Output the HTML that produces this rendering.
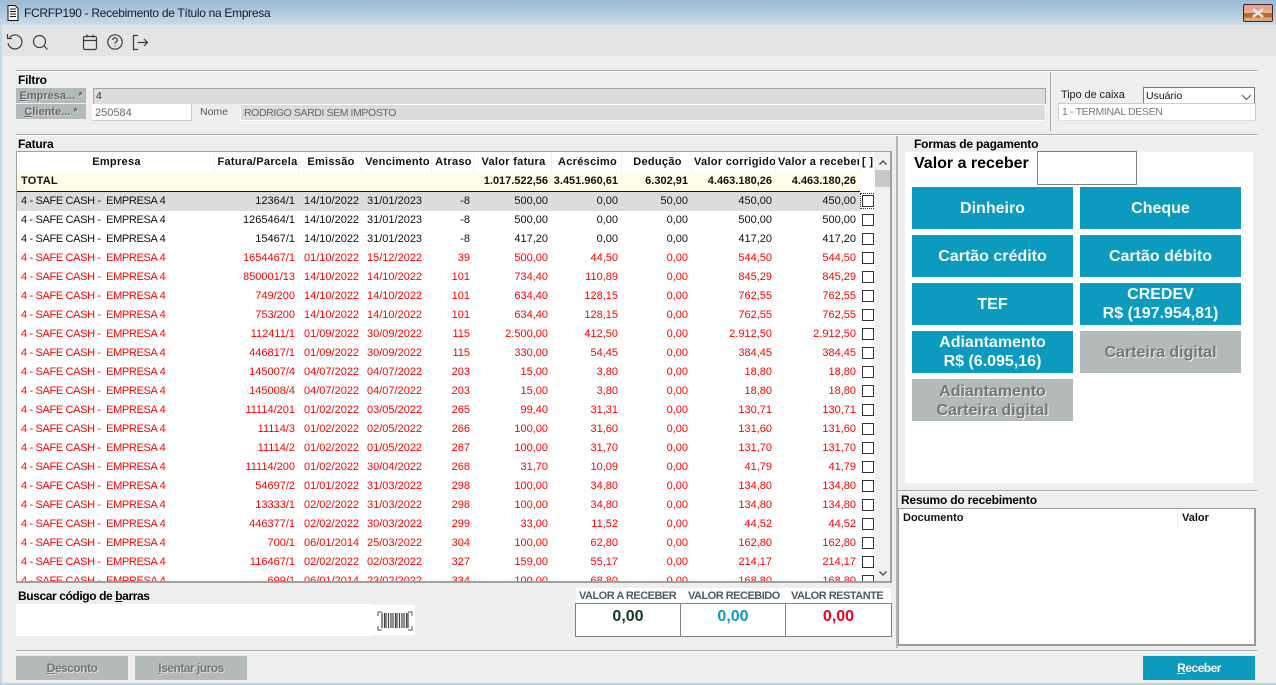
<!DOCTYPE html>
<html lang="pt"><head><meta charset="utf-8"><title>FCRFP190</title>
<style>
*{box-sizing:border-box}
html,body{margin:0;padding:0}
body{width:1276px;height:685px;overflow:hidden;background:#eee;position:relative;font:11px "Liberation Sans",sans-serif;color:#111}
.a{position:absolute}
.l{position:absolute;white-space:nowrap}
.b{font-weight:bold;font-size:12px;color:#000;letter-spacing:-.2px}
.btn{position:absolute;background:#0d9abf;color:#f4fbfd;font-weight:bold;font-size:16px;line-height:19px;text-align:center;display:flex;align-items:center;justify-content:center;width:161px;height:42px}
.dis{background:#b4b9b9;color:#747678;text-shadow:1px 1px 0 #eee}
.sb{position:absolute;top:656px;height:24px;width:112px;background:#b4b9b9;color:#747678;font-weight:bold;font-size:12px;line-height:24px;text-align:center;text-shadow:1px 1px 0 #ddd;letter-spacing:-.5px}
.hr{position:absolute;height:2px;background:#aaa;border-bottom:1px solid #fafafa}
.lb{position:absolute;left:16px;width:70px;height:15px;background:#b4b9b9;color:#68686c;text-align:center;line-height:17px;font-weight:bold;text-shadow:1px 1px 0 #ddd;overflow:hidden}
table{border-collapse:separate;border-spacing:0;table-layout:fixed;position:absolute;left:0;top:0;width:858px}
td,th{padding:0;height:19px;line-height:19px;white-space:nowrap;overflow:hidden;text-align:right;padding-right:4px;font-size:11px}
th{font-weight:bold;text-align:center;padding:0 0 0 2px;height:20px;line-height:18px;border-right:1px solid #f0f0f0;letter-spacing:.3px;color:#111}
td:first-child{text-align:left;padding-left:4px;letter-spacing:-.35px}
td:nth-child(3),td:nth-child(4){text-align:left;padding-left:5px;padding-right:0}
.t td{background:#fffde8;font-weight:bold;border-bottom:1px solid #111;height:20px;line-height:19px}
.t td:first-child{letter-spacing:.25px}
.r td{color:#ff0000}
.s td{background:#dcdcdc}
td:last-child,.s td:last-child{background:#fff;padding:0;position:relative}
td i{position:absolute;left:2px;top:3px;width:12px;height:12px;border:1px solid #333;background:#fff}
.sel i{outline:1px dotted #333;outline-offset:1px}
.v{font-weight:bold;line-height:14px;color:#4f5a68;letter-spacing:-.5px}
.n{top:608px;text-align:center;font-weight:bold;font-size:16px;line-height:18px}
</style></head><body>

<div class="a" style="left:0;top:0;width:1276px;height:25px;background:linear-gradient(#9bb8d4,#c9dbea)"></div>
<svg class="a" style="left:5px;top:4px" width="16" height="18" viewBox="0 0 16 18"><path d="M3 1.500h7l3 3v12H3z" fill="#fff" stroke="#111"/><path d="M5 5h6M5 7.500h6M5 10h6M5 12.500h6" stroke="#111"/></svg>
<div class="l" style="left:24px;top:6px;font-size:12px;line-height:15px;color:#1a1a2a;letter-spacing:-.3px">FCRFP190 - Recebimento de Título na Empresa</div>
<div class="a" style="left:1243px;top:4px;width:30px;height:18px;border:1px solid #4a2020;border-radius:2px;background:linear-gradient(#e5a18e 0 30%,#e3b48f 30% 50%,#b96a2e 50% 78%,#dca67c 78%)"></div>
<svg class="a" style="left:1251px;top:7px" width="14" height="12" viewBox="0 0 14 12"><path d="M2 2l10 8M12 2l-10 8" stroke="#e6e6e6" stroke-width="2.500"/></svg>

<div class="a" style="left:0;top:25px;width:1276px;height:31px;background:#e4e4e4"></div>
<svg class="a" style="left:0;top:25px" width="160" height="30" viewBox="0 0 160 30" fill="none" stroke="#3c3c3c" stroke-width="1.200">
<path d="M9.500 12.500A7 7 0 1 1 8 18"/><path d="M7.500 9v4.500H12"/>
<circle cx="39.500" cy="16.500" r="6"/><path d="M44 21l3.500 3.500"/>
<rect x="83.500" y="11.500" width="13" height="13" rx="1.500"/><path d="M83.500 15.500h13M87 9.500v3M93 9.500v3"/>
<circle cx="115" cy="17" r="7.200"/><path d="M112.800 15a2.200 2.200 0 1 1 3.200 2c-.8.5-1 .9-1 1.800M115 20.500v1"/>
<path d="M138 10.500h-4.500v14h4.500"/><path d="M137.500 17.500h10M144 14l3.500 3.500-3.500 3.500"/>
</svg>

<div class="a" style="left:0;top:25px;width:2px;height:660px;background:#c4d8ea"></div>
<div class="a" style="left:0;top:683px;width:1276px;height:2px;background:#b9d3ea"></div>

<div class="hr" style="left:16px;top:70px;width:1242px"></div>
<div class="l b" style="left:18px;top:73px;line-height:14px">Filtro</div>
<div class="a" style="left:1050px;top:72px;width:1px;height:59px;background:#aaa"></div>

<div class="lb" style="top:88px"><u>E</u>mpresa... *</div>
<div class="lb" style="top:104px"><u>C</u>liente... *</div>
<div class="a" style="left:93px;top:88px;width:953px;height:16px;background:#dcdcdc;border:1px solid #a5a5a5;border-bottom-color:#ddd;line-height:14px;padding-left:2px;font-size:10.500px;color:#333">4</div>
<div class="a" style="left:92px;top:104px;width:100px;height:17px;background:#fff;border-right:1px solid #ccc;border-bottom:1px solid #ccc;line-height:18px;padding-left:3px;color:#666">250584</div>
<div class="l" style="left:200px;top:105px;font-size:10.500px;line-height:14px;color:#555">Nome</div>
<div class="a" style="left:240px;top:104px;width:806px;height:17px;background:#dcdcdc;border:1px solid #fff;line-height:16px;padding-left:3px;font-size:10.500px;color:#666;letter-spacing:-.4px">RODRIGO SARDI SEM IMPOSTO</div>

<div class="l" style="left:1061px;top:88px;line-height:15px;color:#222;letter-spacing:-.1px">Tipo de caixa</div>
<div class="a" style="left:1143px;top:87px;width:112px;height:17px;background:#fff;border:1px solid #777;line-height:16px;padding-left:2px;font-size:10.500px;color:#111">Usuário</div>
<svg class="a" style="left:1241px;top:94px" width="11" height="7"><path d="M1 1l4.500 4.500L10 1" fill="none" stroke="#555"/></svg>
<div class="a" style="left:1058px;top:103px;width:198px;height:18px;background:#fff;border:1px solid #ccc;border-bottom:1px solid #ddd;line-height:16px;padding-left:3px;font-size:10.500px;color:#6d7b88;letter-spacing:-.35px">1 - TERMINAL DESEN</div>

<div class="hr" style="left:16px;top:134px;width:1242px"></div>
<div class="l b" style="left:18px;top:137px;line-height:14px">Fatura</div>

<div class="a" style="left:16px;top:151px;width:876px;height:432px;background:#fff;border:1px solid #a0a0a0;border-width:1px 2px 2px 1px;overflow:hidden">
<table>
<colgroup><col style="width:198px"><col style="width:84px"><col style="width:63px"><col style="width:70px"><col style="width:42px"><col style="width:78px"><col style="width:70px"><col style="width:70px"><col style="width:84px"><col style="width:84px"><col style="width:15px"></colgroup>
<tr><th>Empresa</th><th>Fatura/Parcela</th><th>Emissão</th><th>Vencimento</th><th>Atraso</th><th>Valor fatura</th><th>Acréscimo</th><th>Dedução</th><th>Valor corrigido</th><th>Valor a receber</th><th style="text-align:left">[ ]</th></tr>
<tr class="t"><td>TOTAL</td><td></td><td></td><td></td><td></td><td>1.017.522,56</td><td>3.451.960,61</td><td>6.302,91</td><td>4.463.180,26</td><td>4.463.180,26</td><td style="border-bottom:0"></td></tr>
<tr class="s"><td>4 - SAFE CASH -&nbsp; EMPRESA 4</td><td>12364/1</td><td>14/10/2022</td><td>31/01/2023</td><td>-8</td><td>500,00</td><td>0,00</td><td>50,00</td><td>450,00</td><td>450,00</td><td class="sel"><i></i></td></tr>
<tr><td>4 - SAFE CASH -&nbsp; EMPRESA 4</td><td>1265464/1</td><td>14/10/2022</td><td>31/01/2023</td><td>-8</td><td>500,00</td><td>0,00</td><td>0,00</td><td>500,00</td><td>500,00</td><td><i></i></td></tr>
<tr><td>4 - SAFE CASH -&nbsp; EMPRESA 4</td><td>15467/1</td><td>14/10/2022</td><td>31/01/2023</td><td>-8</td><td>417,20</td><td>0,00</td><td>0,00</td><td>417,20</td><td>417,20</td><td><i></i></td></tr>
<tr class="r"><td>4 - SAFE CASH -&nbsp; EMPRESA 4</td><td>1654467/1</td><td>01/10/2022</td><td>15/12/2022</td><td>39</td><td>500,00</td><td>44,50</td><td>0,00</td><td>544,50</td><td>544,50</td><td><i></i></td></tr>
<tr class="r"><td>4 - SAFE CASH -&nbsp; EMPRESA 4</td><td>850001/13</td><td>14/10/2022</td><td>14/10/2022</td><td>101</td><td>734,40</td><td>110,89</td><td>0,00</td><td>845,29</td><td>845,29</td><td><i></i></td></tr>
<tr class="r"><td>4 - SAFE CASH -&nbsp; EMPRESA 4</td><td>749/200</td><td>14/10/2022</td><td>14/10/2022</td><td>101</td><td>634,40</td><td>128,15</td><td>0,00</td><td>762,55</td><td>762,55</td><td><i></i></td></tr>
<tr class="r"><td>4 - SAFE CASH -&nbsp; EMPRESA 4</td><td>753/200</td><td>14/10/2022</td><td>14/10/2022</td><td>101</td><td>634,40</td><td>128,15</td><td>0,00</td><td>762,55</td><td>762,55</td><td><i></i></td></tr>
<tr class="r"><td>4 - SAFE CASH -&nbsp; EMPRESA 4</td><td>112411/1</td><td>01/09/2022</td><td>30/09/2022</td><td>115</td><td>2.500,00</td><td>412,50</td><td>0,00</td><td>2.912,50</td><td>2.912,50</td><td><i></i></td></tr>
<tr class="r"><td>4 - SAFE CASH -&nbsp; EMPRESA 4</td><td>446817/1</td><td>01/09/2022</td><td>30/09/2022</td><td>115</td><td>330,00</td><td>54,45</td><td>0,00</td><td>384,45</td><td>384,45</td><td><i></i></td></tr>
<tr class="r"><td>4 - SAFE CASH -&nbsp; EMPRESA 4</td><td>145007/4</td><td>04/07/2022</td><td>04/07/2022</td><td>203</td><td>15,00</td><td>3,80</td><td>0,00</td><td>18,80</td><td>18,80</td><td><i></i></td></tr>
<tr class="r"><td>4 - SAFE CASH -&nbsp; EMPRESA 4</td><td>145008/4</td><td>04/07/2022</td><td>04/07/2022</td><td>203</td><td>15,00</td><td>3,80</td><td>0,00</td><td>18,80</td><td>18,80</td><td><i></i></td></tr>
<tr class="r"><td>4 - SAFE CASH -&nbsp; EMPRESA 4</td><td>11114/201</td><td>01/02/2022</td><td>03/05/2022</td><td>265</td><td>99,40</td><td>31,31</td><td>0,00</td><td>130,71</td><td>130,71</td><td><i></i></td></tr>
<tr class="r"><td>4 - SAFE CASH -&nbsp; EMPRESA 4</td><td>11114/3</td><td>01/02/2022</td><td>02/05/2022</td><td>266</td><td>100,00</td><td>31,60</td><td>0,00</td><td>131,60</td><td>131,60</td><td><i></i></td></tr>
<tr class="r"><td>4 - SAFE CASH -&nbsp; EMPRESA 4</td><td>11114/2</td><td>01/02/2022</td><td>01/05/2022</td><td>267</td><td>100,00</td><td>31,70</td><td>0,00</td><td>131,70</td><td>131,70</td><td><i></i></td></tr>
<tr class="r"><td>4 - SAFE CASH -&nbsp; EMPRESA 4</td><td>11114/200</td><td>01/02/2022</td><td>30/04/2022</td><td>268</td><td>31,70</td><td>10,09</td><td>0,00</td><td>41,79</td><td>41,79</td><td><i></i></td></tr>
<tr class="r"><td>4 - SAFE CASH -&nbsp; EMPRESA 4</td><td>54697/2</td><td>01/01/2022</td><td>31/03/2022</td><td>298</td><td>100,00</td><td>34,80</td><td>0,00</td><td>134,80</td><td>134,80</td><td><i></i></td></tr>
<tr class="r"><td>4 - SAFE CASH -&nbsp; EMPRESA 4</td><td>13333/1</td><td>02/02/2022</td><td>31/03/2022</td><td>298</td><td>100,00</td><td>34,80</td><td>0,00</td><td>134,80</td><td>134,80</td><td><i></i></td></tr>
<tr class="r"><td>4 - SAFE CASH -&nbsp; EMPRESA 4</td><td>446377/1</td><td>02/02/2022</td><td>30/03/2022</td><td>299</td><td>33,00</td><td>11,52</td><td>0,00</td><td>44,52</td><td>44,52</td><td><i></i></td></tr>
<tr class="r"><td>4 - SAFE CASH -&nbsp; EMPRESA 4</td><td>700/1</td><td>06/01/2014</td><td>25/03/2022</td><td>304</td><td>100,00</td><td>62,80</td><td>0,00</td><td>162,80</td><td>162,80</td><td><i></i></td></tr>
<tr class="r"><td>4 - SAFE CASH -&nbsp; EMPRESA 4</td><td>116467/1</td><td>02/02/2022</td><td>02/03/2022</td><td>327</td><td>159,00</td><td>55,17</td><td>0,00</td><td>214,17</td><td>214,17</td><td><i></i></td></tr>
<tr class="r"><td>4 - SAFE CASH -&nbsp; EMPRESA 4</td><td>699/1</td><td>06/01/2014</td><td>23/02/2022</td><td>334</td><td>100,00</td><td>68,80</td><td>0,00</td><td>168,80</td><td>168,80</td><td><i></i></td></tr>
</table>
<div class="a" style="left:858px;top:0;width:16px;height:430px;background:#f0f0f0"></div>
<div class="a" style="left:858px;top:18px;width:15px;height:17px;background:#c8c8c8"></div>
<svg class="a" style="left:861px;top:7px" width="10" height="7"><path d="M1.500 5.500L5 2l3.500 3.500" fill="none" stroke="#555" stroke-width="1.500"/></svg>
<svg class="a" style="left:861px;top:418px" width="10" height="7"><path d="M1.500 1.500L5 5l3.500-3.500" fill="none" stroke="#555" stroke-width="1.500"/></svg>
</div>

<div class="l b" style="left:18px;top:589px;line-height:14px;letter-spacing:-.4px">Buscar código de <u>b</u>arras</div>
<div class="a" style="left:16px;top:604px;width:357px;height:32px;background:#fff"></div>
<div class="a" style="left:373px;top:605px;width:42px;height:30px;background:#fff"></div>
<svg class="a" style="left:377px;top:611px" width="36" height="20" viewBox="0 0 36 20"><path d="M1 5V1h4M31 1h4v4M1 15v4h4M31 19h4v-4" fill="none" stroke="#555"/><path d="M5 2v15M7.500 2v15M9 2v15M11.500 2v15M14 2v15M16 2v15M18.500 2v15M20 2v15M22.500 2v15M25 2v15M27 2v15M29.500 2v15M31 2v15" stroke="#444" stroke-width="1.200"/></svg>

<div class="a" style="left:576px;top:588px;width:315px;height:15px;background:#fff"></div>
<div class="l v" style="left:579px;top:589px">VALOR A RECEBER</div>
<div class="l v" style="left:688px;top:589px">VALOR RECEBIDO</div>
<div class="l v" style="left:791px;top:589px">VALOR RESTANTE</div>
<div class="a" style="left:575px;top:603px;width:317px;height:34px;background:#fff;border:1px solid #808080"></div>
<div class="a" style="left:680px;top:603px;width:1px;height:34px;background:#808080"></div>
<div class="a" style="left:785px;top:603px;width:1px;height:34px;background:#808080"></div>
<div class="l n" style="left:576px;width:104px;color:#0b3b22">0,00</div>
<div class="l n" style="left:681px;width:104px;color:#0d9abf">0,00</div>
<div class="l n" style="left:786px;width:105px;color:#f00020">0,00</div>

<div class="a" style="left:896px;top:136px;width:2px;height:512px;background:#b5b5b5"></div>
<div class="l b" style="left:914px;top:137px;line-height:14px">Formas de pagamento</div>
<div class="a" style="left:905px;top:152px;width:348px;height:331px;background:#fff"></div>
<div class="l" style="left:914px;top:155px;font-weight:bold;font-size:16px;line-height:18px;color:#000">Valor a receber</div>
<div class="a" style="left:1037px;top:151px;width:100px;height:34px;background:#fff;border:1px solid #808080"></div>

<div class="btn" style="left:912px;top:187px">Dinheiro</div>
<div class="btn" style="left:1080px;top:187px">Cheque</div>
<div class="btn" style="left:912px;top:235px">Cartão crédito</div>
<div class="btn" style="left:1080px;top:235px">Cartão débito</div>
<div class="btn" style="left:912px;top:283px">TEF</div>
<div class="btn" style="left:1080px;top:283px">CREDEV<br>R$ (197.954,81)</div>
<div class="btn" style="left:912px;top:331px">Adiantamento<br>R$ (6.095,16)</div>
<div class="btn dis" style="left:1080px;top:331px">Carteira digital</div>
<div class="btn dis" style="left:912px;top:379px;padding-top:2px">Adiantamento<br>Carteira digital</div>

<div class="hr" style="left:898px;top:490px;width:360px"></div>
<div class="l b" style="left:901px;top:493px;line-height:14px">Resumo do recebimento</div>
<div class="a" style="left:898px;top:508px;width:358px;height:138px;background:#fff;border:1px solid #999;border-width:1px 2px 2px 1px"></div>
<div class="l" style="left:903px;top:511px;font-weight:bold;line-height:14px;color:#111">Documento</div>
<div class="a" style="left:1177px;top:509px;width:1px;height:20px;background:#eee"></div>
<div class="l" style="left:1182px;top:511px;font-weight:bold;line-height:14px;color:#111">Valor</div>

<div class="hr" style="left:16px;top:650px;width:1242px"></div>
<div class="sb" style="left:16px"><u>D</u>esconto</div>
<div class="sb" style="left:135px"><u>I</u>sentar juros</div>
<div class="sb" style="left:1143px;background:#0d9abf;color:#f4fbfd;text-shadow:none"><u>R</u>eceber</div>
</body></html>
